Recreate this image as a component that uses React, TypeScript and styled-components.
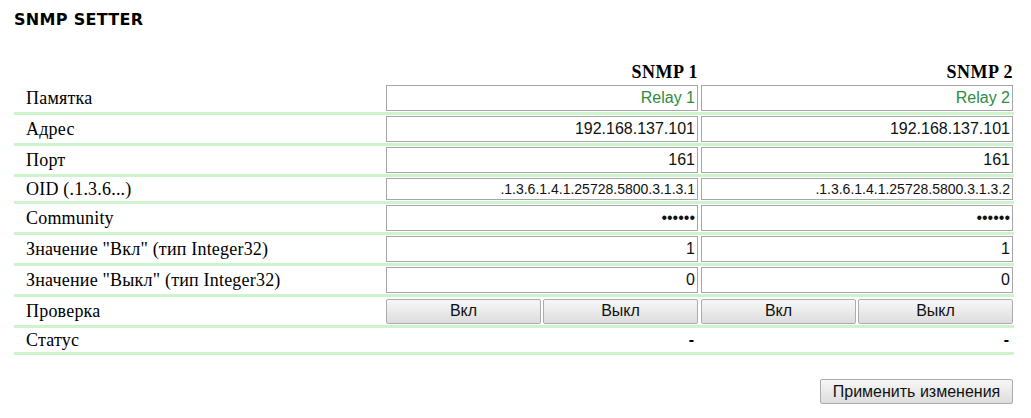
import React from "react";
import styled, { createGlobalStyle } from "styled-components";

const Global = createGlobalStyle`
  html, body { margin: 0; padding: 0; background: #ffffff; }
  body { font-family: "Liberation Serif", "Times New Roman", serif; color: #000; }
`;

const Page = styled.div`
  padding: 10px 17px 0 14px;
  width: 1000px;
`;

const Title = styled.h1`
  margin: 0;
  font-family: "DejaVu Sans", Verdana, sans-serif;
  font-weight: bold;
  font-size: 16px;
  line-height: 19px;
  letter-spacing: 0.3px;
`;

const Table = styled.div`
  margin-top: 31px;
  display: flex;
  flex-direction: column;
`;

const Row = styled.div<{ $head?: boolean; $compact?: boolean }>`
  display: grid;
  grid-template-columns: 372px 315px 313px;
  align-items: center;
  padding: ${(p) => (p.$head ? "0" : "1px 0")};
  height: ${(p) => (p.$head ? "24px" : p.$compact ? "22px" : "26px")};
  border-bottom: ${(p) => (p.$head ? "none" : "3px solid #cdf5cd")};
`;

const Label = styled.div`
  padding-left: 12px;
  font-size: 18px;
  line-height: 20px;
  letter-spacing: 0.2px;
  white-space: nowrap;
`;

const Head = styled.div`
  width: 312px;
  text-align: right;
  font-weight: bold;
  font-size: 18px;
  line-height: 24px;
  letter-spacing: 0.5px;
`;

const Field = styled.input<{ $green?: boolean; $small?: boolean }>`
  box-sizing: border-box;
  width: 312px;
  height: ${(p) => (p.$small ? "22px" : "26px")};
  margin: 0;
  padding: 1px 2px;
  border: 1px solid #a6a6a6;
  background: #fff;
  text-align: right;
  font-family: "Liberation Sans", Arial, sans-serif;
  font-size: ${(p) => (p.$small ? "14px" : "16px")};
  color: ${(p) => (p.$green ? "#2e8b40" : "#111")};
  outline: none;
`;

const ButtonPair = styled.div`
  display: flex;
  gap: 2px;
  width: 312px;
`;

const Btn = styled.button<{ $w?: string }>`
  box-sizing: border-box;
  width: ${(p) => p.$w || "155px"};
  height: 25px;
  margin: 0;
  padding: 0 6px;
  border: 1px solid #acacac;
  border-radius: 2px;
  background: linear-gradient(#f7f7f7, #dddddd);
  font-family: "Liberation Sans", Arial, sans-serif;
  font-size: 16px;
  color: #111;
`;

const Status = styled.div`
  width: 312px;
  text-align: right;
  font-family: "Liberation Sans", Arial, sans-serif;
  font-size: 16px;
  font-weight: bold;
  padding-right: 4px;
  box-sizing: border-box;
`;

const Footer = styled.div`
  display: flex;
  justify-content: flex-end;
  margin-top: 24px;
  padding-right: 1px;
`;

const rows: { label: string; v: [string, string]; green?: boolean; small?: boolean; pwd?: boolean }[] = [
  { label: "Памятка", v: ["Relay 1", "Relay 2"], green: true },
  { label: "Адрес", v: ["192.168.137.101", "192.168.137.101"] },
  { label: "Порт", v: ["161", "161"] },
  { label: "OID (.1.3.6...)", v: [".1.3.6.1.4.1.25728.5800.3.1.3.1", ".1.3.6.1.4.1.25728.5800.3.1.3.2"], small: true },
  { label: "Community", v: ["public", "public"], pwd: true },
  { label: 'Значение "Вкл" (тип Integer32)', v: ["1", "1"] },
  { label: 'Значение "Выкл" (тип Integer32)', v: ["0", "0"] },
];

export default function App() {
  return (
    <>
      <Global />
      <Page>
        <Title>SNMP SETTER</Title>
        <Table>
          <Row $head>
            <div />
            <Head>SNMP 1</Head>
            <Head>SNMP 2</Head>
          </Row>
          {rows.map((r) => (
            <Row key={r.label} $compact={r.small}>
              <Label>{r.label}</Label>
              {r.v.map((val, i) => (
                <div key={i}>
                  <Field
                    type={r.pwd ? "password" : "text"}
                    value={val}
                    readOnly
                    $green={r.green}
                    $small={r.small}
                  />
                </div>
              ))}
            </Row>
          ))}
          <Row>
            <Label>Проверка</Label>
            <ButtonPair>
              <Btn>Вкл</Btn>
              <Btn>Выкл</Btn>
            </ButtonPair>
            <ButtonPair>
              <Btn>Вкл</Btn>
              <Btn>Выкл</Btn>
            </ButtonPair>
          </Row>
          <Row $compact>
            <Label>Статус</Label>
            <Status>-</Status>
            <Status>-</Status>
          </Row>
        </Table>
        <Footer>
          <Btn $w="193px">Применить изменения</Btn>
        </Footer>
      </Page>
    </>
  );
}
